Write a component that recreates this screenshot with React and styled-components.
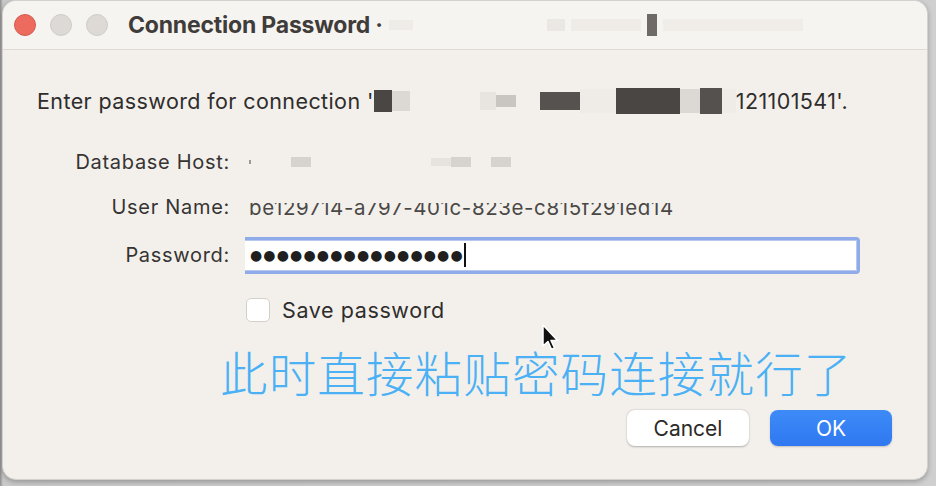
import React from "react";
import styled, { createGlobalStyle } from "styled-components";

const Global = createGlobalStyle`
  html, body { margin: 0; padding: 0; }
  body {
    width: 936px; height: 486px; overflow: hidden;
    background: linear-gradient(90deg, #8d8d8d 0px, #c9c9c9 3px, #cfcfcf 100%);
    font-family: Inter, "Noto Sans", "Liberation Sans", sans-serif;
  }
`;

const Window = styled.div`
  position: relative;
  margin-left: 2px;
  width: 926px;
  height: 480px;
  box-sizing: border-box;
  border-radius: 14px;
  background: #f3f0ec;
  border: 1px solid #d4d1cd;
  box-shadow: 0 2px 5px rgba(0,0,0,0.25);
  display: flex;
  flex-direction: column;
  overflow: hidden;
`;

const TitleBar = styled.div`
  height: 48px;
  flex: none;
  background: #f6f4f0;
  border-bottom: 1px solid #dedad6;
  display: flex;
  align-items: center;
  padding-left: 11px;
  gap: 14px;
`;

const Light = styled.span`
  width: 22px;
  height: 22px;
  border-radius: 50%;
  background: ${p => p.$red ? "#ec6a5e" : "#dddad6"};
  border: 1px solid ${p => p.$red ? "#d45a4f" : "#cfccc8"};
  box-sizing: border-box;
`;

const TitleText = styled.div`
  margin-left: 6px;
  font-size: 23px;
  font-weight: 700;
  color: #3f3c3a;
  letter-spacing: -0.2px;
  display: flex;
  align-items: center;
  gap: 6px;
  white-space: nowrap;
`;

const Mosaic = styled.span`
  display: inline-block;
  width: ${p => p.$w}px;
  height: ${p => p.$h || 14}px;
  background: ${p => p.$c || "#ebe8e4"};
  vertical-align: middle;
  margin-left: ${p => p.$ml || 0}px;
`;

const Body = styled.div`
  flex: 1;
  display: flex;
  flex-direction: column;
  padding: 38px 35px 0 34px;
`;

const Message = styled.div`
  font-size: 21.5px;
  letter-spacing: 0.4px;
  color: #2f2d2b;
  height: 26px;
  display: flex;
  align-items: center;
  white-space: nowrap;
`;

const Form = styled.div`
  margin-top: 26px;
  display: grid;
  grid-template-columns: 193px 1fr;
  column-gap: 15px;
  align-items: center;
`;

const Label = styled.div`
  text-align: right;
  font-size: 20px;
  letter-spacing: 0.7px;
  color: #363432;
  height: ${p => p.$h}px;
  line-height: ${p => p.$h}px;
`;

const Value = styled.div`
  font-size: 17px;
  color: #555;
  height: ${p => p.$h}px;
  line-height: ${p => p.$h}px;
  white-space: nowrap;
  overflow: hidden;
  display: flex;
  align-items: center;
  padding-left: 4px;
`;

const UserName = styled.span`
  display: block;
  height: 15px;
  line-height: 24px;
  overflow: hidden;
  margin-top: 6px;
  font-size: 20.5px;
  letter-spacing: 0.6px;
  color: #4a4846;
`;

const UserInner = styled.span`
  display: block;
  transform: translateY(-7px);
`;

const PasswordBox = styled.div`
  width: 619px;
  height: 37px;
  box-sizing: border-box;
  border: 3px solid #8fabe9;
  border-radius: 4px;
  background: #fff;
  display: flex;
  align-items: center;
  padding-left: 6px;
  margin-left: -8px;
  box-shadow: inset 0 0 0 1px #b8c9ef;
`;

const Dots = styled.span`
  font-size: 14px;
  letter-spacing: 1.15px;
  color: #1f1f1f;
  font-family: "DejaVu Sans", sans-serif;
`;

const Caret = styled.span`
  width: 2px;
  height: 24px;
  background: #111;
`;

const CheckRow = styled.div`
  grid-column: 2;
  display: flex;
  align-items: center;
  gap: 12px;
  height: 60px;
  margin-left: 1px;
`;

const Check = styled.span`
  width: 24px;
  height: 24px;
  box-sizing: border-box;
  border-radius: 5px;
  background: #fff;
  border: 1px solid #d3d0cc;
`;

const CheckLabel = styled.span`
  font-size: 21.5px;
  letter-spacing: 0.6px;
  color: #2f2d2b;
`;

const Buttons = styled.div`
  margin-top: auto;
  margin-bottom: 33px;
  display: flex;
  justify-content: flex-end;
  gap: 21px;
`;

const Button = styled.div`
  width: 122px;
  height: 36px;
  border-radius: 8px;
  display: flex;
  align-items: center;
  justify-content: center;
  font-size: 21px;
  background: ${p => p.$primary ? "linear-gradient(#3d8bf7, #2f78f1)" : "#fff"};
  color: ${p => p.$primary ? "#fff" : "#2c2a28"};
  box-shadow: ${p => p.$primary ? "0 1px 2px rgba(0,0,0,0.2)" : "0 0.5px 2px rgba(0,0,0,0.28)"};
`;

const Caption = styled.div`
  position: absolute;
  left: 217px;
  top: 336px;
  font-family: "Noto Sans CJK SC", sans-serif;
  font-weight: 300;
  font-size: 47.5px;
  letter-spacing: 1.15px;
  color: #4bb0f4;
  white-space: nowrap;
`;

const Cursor = styled.svg`
  position: absolute;
  left: 538px;
  top: 323px;
`;

export default function App() {
  return (
    <>
      <Global />
      <Window>
        <TitleBar>
          <Light $red />
          <Light />
          <Light />
          <TitleText>
            Connection Password ·
            <Mosaic $w={24} $h={10} $c="#efece8" />
            <Mosaic $w={18} $h={12} $c="#ebe8e4" $ml={128} />
            <Mosaic $w={70} $h={12} $c="#efece8" />
            <Mosaic $w={10} $h={22} $c="#6d6a67" />
            <Mosaic $w={140} $h={12} $c="#f0ede9" />
          </TitleText>
        </TitleBar>
        <Body>
          <Message>
            Enter password for connection '
            <Mosaic $w={18} $h={22} $c="#4a4644" />
            <Mosaic $w={18} $h={20} $c="#dcd9d5" />
            <Mosaic $w={16} $h={18} $c="#e8e5e1" $ml={70} />
            <Mosaic $w={20} $h={12} $c="#c9c6c2" />
            <Mosaic $w={40} $h={18} $c="#56524f" $ml={24} />
            <Mosaic $w={36} $h={24} $c="#efece8" />
            <Mosaic $w={64} $h={26} $c="#4a4644" />
            <Mosaic $w={20} $h={24} $c="#dcd9d5" />
            <Mosaic $w={22} $h={26} $c="#55514e" />
            <Mosaic $w={14} $h={24} $c="#efece8" />
            121101541'.
          </Message>
          <Form>
            <Label $h={44}>Database Host:</Label>
            <Value $h={44}>
              <Mosaic $w={2} $h={4} $c="#999" />
              <Mosaic $w={20} $h={10} $c="#d6d3cf" $ml={40} />
              <Mosaic $w={20} $h={8} $c="#e6e3df" $ml={120} />
              <Mosaic $w={20} $h={10} $c="#d6d3cf" />
              <Mosaic $w={20} $h={10} $c="#d6d3cf" $ml={20} />
            </Value>
            <Label $h={46}>User Name:</Label>
            <Value $h={46}>
              <UserName><UserInner>be129714-a797-401c-823e-c815f291ed14</UserInner></UserName>
            </Value>
            <Label $h={50}>Password:</Label>
            <Value $h={50}>
              <PasswordBox>
                <Dots>{"●".repeat(16)}</Dots>
                <Caret />
              </PasswordBox>
            </Value>
            <CheckRow>
              <Check />
              <CheckLabel>Save password</CheckLabel>
            </CheckRow>
          </Form>
          <Buttons>
            <Button>Cancel</Button>
            <Button $primary>OK</Button>
          </Buttons>
        </Body>
        <Caption>此时直接粘贴密码连接就行了</Caption>
        <Cursor width="18" height="28" viewBox="0 0 18 28">
          <path d="M2 1 L2 22 L7 17.5 L10.5 25.5 L13.5 24 L10 16.5 L16.5 16.5 Z" fill="#111" stroke="#fff" strokeWidth="1.5" strokeLinejoin="round" />
        </Cursor>
      </Window>
    </>
  );
}
